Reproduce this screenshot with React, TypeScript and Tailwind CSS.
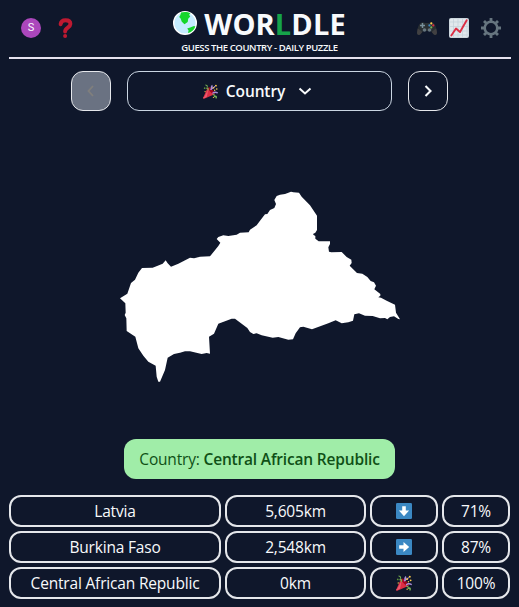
import React from "react";

function Party({ className }: { className: string }) {
  return (
    <svg viewBox="0 0 36 36" className={className}>
      <path d="M11.6 7.6l-11 25c-.5 1.3-.3 2.4 1 2.8 1 .2 1.700-.1 2.500-.4l25-11z" fill="#dd2e44" />
      <path d="M13 12L3 31l-2 1-.4 1 .5 2L9 31z" fill="#ea596e" />
      <ellipse cx="20" cy="16" rx="3.600" ry="10.500" transform="rotate(-43 20 16)" fill="#a0041e" />
      <path d="M19 14c-1-5-1-9 3-12 2 3 2 7-1 12z" fill="#aa8dd8" />
      <path d="M6 1c6 1 7 5 4 8 4 0 5 3 3 7l-2-1c1-3 0-4-4-3 3-5 4-7-2-9z" fill="#77b255" />
      <path d="M22 21c5-4 9-3 14-1l-1 3c-5-2-8-2-12 1z" fill="#aa8dd8" />
      <path d="M24 24c4 0 5 2 4 4 4-1 7 1 5 7h-3c1-3 0-4-4-3 1-4 1-5-3-5z" fill="#77b255" />
      <path d="M18 14C20 9 27 13 28 5" fill="none" stroke="#aa8dd8" strokeWidth="2.500" />
      <g fill="#ffcc4d">
        <circle cx="25" cy="9" r="2" /><circle cx="31" cy="4" r="2.200" />
        <circle cx="33" cy="12" r="2" /><circle cx="28" cy="15" r="1.700" />
        <circle cx="5" cy="18" r="1.500" /><circle cx="25" cy="32" r="1.500" />
      </g>
      <circle cx="4" cy="10" r="2" fill="#5c913b" />
    </svg>
  );
}

function Arrow({ right = false }: { right?: boolean }) {
  return (
    <svg viewBox="0 0 16 16" className="size-4">
      <rect width="16" height="16" rx="1.200" fill="#3b88c3" />
      <path
        d="M6.200 3.200h3.600v4.300h3.300L8 13.200 2.900 7.500h3.300z"
        fill="#fff"
        transform={right ? "rotate(-90 8 8)" : undefined}
      />
    </svg>
  );
}

function Globe() {
  return (
    <svg viewBox="0 0 24 24" className="size-6 shrink-0">
      <circle cx="12" cy="12" r="11.300" fill="#c5ecff" stroke="#fff" strokeWidth="1.400" />
      <path d="M8 1.600C11 .7 15 1 17.500 2.200L16 3.800l1.300 1.700-2.100 2.200-.5 3.300-3.200 2.200-2.700-2.500-1.200-3.200-1.400-1.500L7.400 4z" fill="#16d62b" />
      <path d="M14.200 17.600l3-1 3.800-1.500 1.400.3c-1.400 3.500-3.800 5.700-7.400 6.700l.6-2.500z" fill="#16d62b" />
    </svg>
  );
}

function Gamepad() {
  return (
    <svg viewBox="0 0 20 20" className="h-5 w-5">
      <path d="M2.500 6Q5 3 8 5h4q3-2 5.500 1C19 8.500 20 12.500 20 15c0 2.500-2.500 2.500-4 .5l-2.500-2.500h-7L4 15.500C2.500 17.500 0 17.500 0 15c0-2.500 1-6.500 2.500-9z" fill="#292f33" />
      <path d="M0 14.500l.8-4L3 12l2.200 2-1.700 2.200C2.200 17.500 0 17 0 14.500zm20 0l-.8-4L17 12l-2.200 2 1.700 2.200c1.300 1.300 3.500.8 3.500-1.700z" fill="#414042" />
      <path d="M5.500 4.900v5M3 7.400h5" stroke="#78909c" strokeWidth="1.500" />
      <circle cx="7.500" cy="12" r="1.800" fill="#66757f" />
      <circle cx="12.500" cy="12" r="1.800" fill="#66757f" />
      <circle cx="14.300" cy="5.400" r="1.100" fill="#ffcc4d" />
      <circle cx="12.400" cy="7.400" r="1.100" fill="#3b88c3" />
      <circle cx="16.300" cy="7.400" r="1.100" fill="#dd2e44" />
      <circle cx="14.300" cy="9.400" r="1.100" fill="#77b255" />
    </svg>
  );
}

function Chart() {
  return (
    <svg viewBox="0 0 20 20" className="h-5 w-5">
      <rect width="20" height="20" rx="2" fill="#ccd6dd" />
      <path d="M1 1h18v18H1z" fill="#e1e8ed" />
      <path d="M4.500 1v18M9 1v18M13.500 1v18M18 1v18M1 4h18M1 8.500h18M1 13h18M1 17h18" stroke="#c3d0d9" strokeWidth=".7" />
      <path d="M2.300 17.500L7 10.500l4 3.500 6.700-11.700" fill="none" stroke="#dd2e44" strokeWidth="1.900" strokeLinecap="round" strokeLinejoin="round" />
    </svg>
  );
}

function Gear() {
  return (
    <svg viewBox="0 0 20 20" className="h-5 w-5" fill="none" stroke="#66757f">
      <circle cx="10" cy="10" r="6.300" strokeWidth="2.600" />
      <g strokeWidth="2.800">
        <path d="M10 0v3.500M10 16.500V20M0 10h3.500M16.500 10H20" />
        <path d="M3 3l2.300 2.300M14.700 14.700L17 17M17 3l-2.300 2.300M5.300 14.700L3 17" />
      </g>
    </svg>
  );
}

const COUNTRY =
  "420,149 440,136 450,122 465,103 472,102 480,90 493,84 498,72 493,60 500,48 510,44 525,42 543,35 550,37 567,38 575,50 600,76 621,107 621,150 616,158 609,162 611,165 616,168 616,176 626,184 660,184 660,192 655,202 657,215 664,217 695,216 710,231 724,239 725,249 719,257 725,263 741,279 757,281 772,291 782,303 792,307 798,317 793,328 811,342 811,347 805,352 813,353 830,362 855,374 858,398 870,418 865,417 852,409 840,411 832,418 825,414 810,415 788,408 765,407 747,400 733,403 729,422 715,427 695,430 677,421 655,430 606,448 580,440 570,442 557,460 549,478 535,479 505,471 488,473 455,466 440,460 430,462 420,456 412,444 375,416 365,416 325,431 312,461 297,470 300,521 290,519 275,522 240,514 225,514 210,518 192,522 173,533 165,570 150,605 145,605 140,590 137,557 115,545 100,527 85,505 76,470 50,453 49,415 44,405 47,398 46,370 30,355 52,341 63,309 75,299 85,278 96,264 128,263 158,251 167,241 173,250 183,260 205,251 240,233 252,235 270,230 300,229 325,198 331,188 320,177 325,171 340,166 355,168 380,164 390,158 416,157";

const rows = [
  { name: "Latvia", distance: "5,605km", hint: <Arrow />, percent: "71%" },
  { name: "Burkina Faso", distance: "2,548km", hint: <Arrow right />, percent: "87%" },
  { name: "Central African Republic", distance: "0km", hint: <Party className="size-4" />, percent: "100%" },
];

const cell = "flex h-8 items-center justify-center rounded-xl border-2 border-gray-200";

export default function App() {
  return (
    <div className="flex h-[607px] w-[519px] flex-col overflow-hidden bg-slate-900 pl-[9px] pr-2 font-['Open_Sans','Noto_Sans',sans-serif] text-[15.5px] tracking-[-0.18px] text-slate-50">
      <header className="flex h-[59px] shrink-0 items-center justify-between border-b-2 border-[#e5e1ee] pl-3 pr-[10px]">
        <div className="flex w-[130px] items-center gap-[14px] pb-px">
          <div className="flex size-5 items-center justify-center rounded-full bg-[#ab47bc] pt-px font-['Roboto',sans-serif] text-[11px]">S</div>
          <svg viewBox="0 0 20 20" className="h-5 w-5" fill="none">
            <path d="M5.600 6.200C5.900 3.500 8 2.300 10.600 2.300c3.200 0 4.800 1.600 4.800 3.800 0 3.500-5.300 3.600-5.300 7.400" stroke="#be1931" strokeWidth="3.900" strokeLinecap="round" />
            <circle cx="10.100" cy="18" r="2" fill="#be1931" />
          </svg>
        </div>
        <div className="mr-[3px] flex flex-col items-center">
          <div className="flex items-center gap-[7px]">
            <Globe />
            <h1 className="mt-[3px] whitespace-nowrap text-[29px] font-bold leading-9 tracking-[0.1px]">
              WOR<span className="text-[#16a34a]">L</span>DLE
            </h1>
          </div>
          <div className="whitespace-nowrap text-[9.500px] font-semibold leading-3 tracking-[-0.4px]">GUESS THE COUNTRY - DAILY PUZZLE</div>
        </div>
        <div className="flex w-[130px] items-center justify-end gap-3 pb-px">
          <Gamepad />
          <Chart />
          <Gear />
        </div>
      </header>

      <nav className="mr-[2px] mt-3 flex h-10 shrink-0 justify-center gap-4">
        <button className="flex w-10 items-center justify-center rounded-xl border border-gray-200 bg-gray-500">
          <svg viewBox="0 0 12 12" className="size-3" fill="none" stroke="#807f7d" strokeWidth="1.800"><path d="M8 1L3.500 6 8 11" /></svg>
        </button>
        <button className="flex w-[265px] items-center justify-center rounded-xl border border-slate-300 pr-[3px]">
          <Party className="mr-2 size-[15px]" />
          <span className="pt-px font-semibold tracking-[-0.1px]">Country</span>
          <svg viewBox="0 0 14 14" className="ml-[13px] size-[14px]" fill="none" stroke="currentColor" strokeWidth="2"><path d="M1.500 4.500L7 9.500l5.500-5" /></svg>
        </button>
        <button className="flex w-10 items-center justify-center rounded-xl border border-gray-200">
          <svg viewBox="0 0 12 12" className="size-3" fill="none" stroke="currentColor" strokeWidth="2.100"><path d="M3.500 1L8.500 6l-5 5" /></svg>
        </button>
      </nav>

      <main className="flex h-[328px] shrink-0 items-center justify-center">
        <svg viewBox="0 0 900 630" className="mt-5 h-[210px] w-[300px]">
          <polygon points={COUNTRY} fill="#fff" />
        </svg>
      </main>

      <div className="mr-[2px] flex h-10 w-[271px] shrink-0 items-center justify-center self-center whitespace-pre rounded-xl bg-[#a0eda8] pl-px pt-[2px] text-[#0f5016]">
        Country: <span className="font-semibold">Central African Republic</span>
      </div>

      <div className="mt-4 grid grid-cols-[212px_141px_68px_68px] gap-1">
        {rows.map((row) => (
          <React.Fragment key={row.name}>
            <div className={`${cell} pt-[2px]`}>{row.name}</div>
            <div className={`${cell} pt-[2px]`}>{row.distance}</div>
            <div className={cell}>{row.hint}</div>
            <div className={`${cell} pt-[2px]`}>{row.percent}</div>
          </React.Fragment>
        ))}
      </div>
    </div>
  );
}
